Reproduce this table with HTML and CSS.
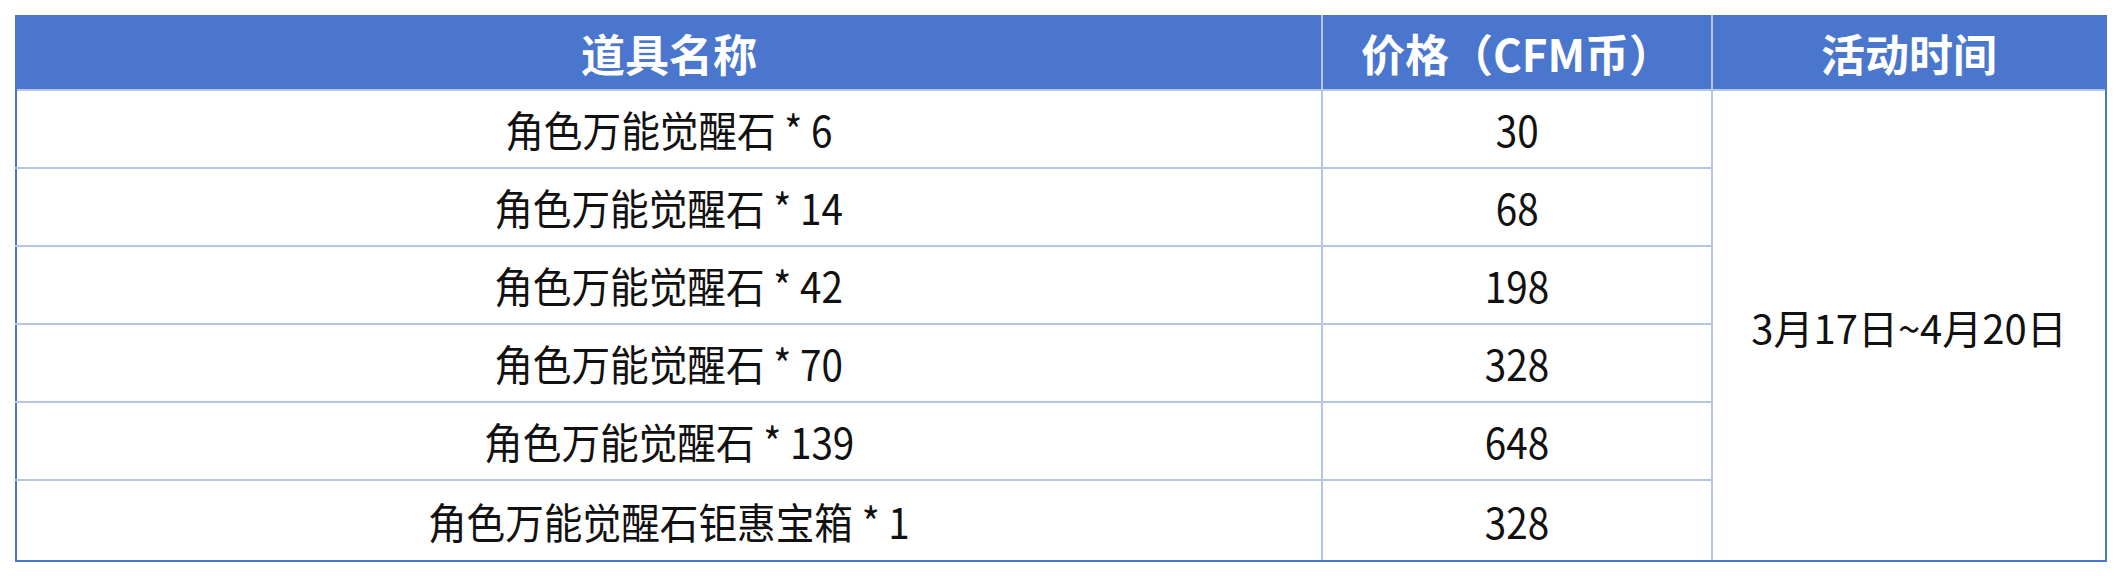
FILE: index.html
```html
<!DOCTYPE html>
<html lang="zh-CN">
<head>
<meta charset="utf-8">
<title>角色万能觉醒石</title>
<link rel="stylesheet" href="styles.css">
</head>
<body>
<table class="price-table">
  <colgroup>
    <col class="col-name">
    <col class="col-price">
    <col class="col-time">
  </colgroup>
  <thead>
    <tr>
      <th><span class="sq-h">道具名称</span></th>
      <th><span class="sq-h">价格（CFM币）</span></th>
      <th><span class="sq-h">活动时间</span></th>
    </tr>
  </thead>
  <tbody>
    <tr>
      <td><span class="sq">角色万能觉醒石 * 6</span></td>
      <td><span class="sq">30</span></td>
      <td class="time" rowspan="6"><span class="sq-d">3月17日~4月20日</span></td>
    </tr>
    <tr>
      <td><span class="sq">角色万能觉醒石 * 14</span></td>
      <td><span class="sq">68</span></td>
    </tr>
    <tr>
      <td><span class="sq">角色万能觉醒石 * 42</span></td>
      <td><span class="sq">198</span></td>
    </tr>
    <tr>
      <td><span class="sq">角色万能觉醒石 * 70</span></td>
      <td><span class="sq">328</span></td>
    </tr>
    <tr>
      <td><span class="sq">角色万能觉醒石 * 139</span></td>
      <td><span class="sq">648</span></td>
    </tr>
    <tr class="last">
      <td><span class="sq">角色万能觉醒石钜惠宝箱 * 1</span></td>
      <td><span class="sq">328</span></td>
    </tr>
  </tbody>
</table>
</body>
</html>
```
FILE: styles.css
```css
html, body {
  margin: 0;
  padding: 0;
  background: #ffffff;
}

body {
  padding: 15px;
  font-family: "Noto Sans CJK SC", "Noto Sans", sans-serif;
  color: #111111;
}

.price-table {
  border-collapse: collapse;
  table-layout: fixed;
  width: 2090px;
  border: 2px solid #4a76cd;
}

.col-name { width: 1306px; }
.col-price { width: 390px; }
.col-time { width: 394px; }

.price-table th {
  height: 72px;
  padding: 0;
  background: #4a76cd;
  color: #ffffff;
  font-size: 44px;
  font-weight: 700;
  line-height: 1;
  text-align: center;
  vertical-align: middle;
  border-left: 2px solid #b4c7e7;
  border-right: 2px solid #b4c7e7;
}

.price-table th:first-child { border-left: 2px solid #4a76cd; }
.price-table th:last-child { border-right: 2px solid #4a76cd; }

.price-table td {
  height: 76px;
  padding: 0;
  font-size: 42px;
  line-height: 1;
  text-align: center;
  vertical-align: middle;
  border: 2px solid #b4c7e7;
}

.price-table tr.last td { height: 79px; border-bottom: 2px solid #4a76cd; }
.price-table td:first-child { border-left: 2px solid #4a76cd; }
.price-table td.time { border-right: 2px solid #4a76cd; border-bottom: 2px solid #4a76cd; }

.sq,
.sq-h,
.sq-d {
  display: inline-block;
  white-space: nowrap;
}

.sq { transform: scaleX(0.92); }
.sq-d { font-size: 40px; }
```
